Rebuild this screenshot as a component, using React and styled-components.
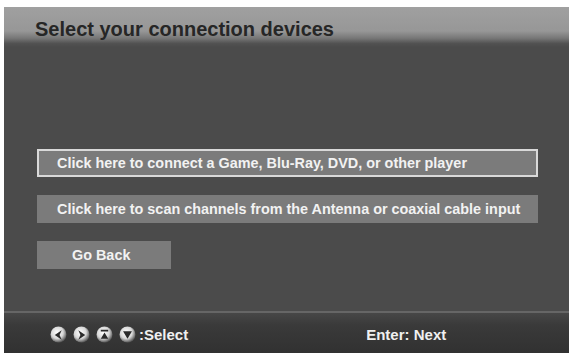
import React from "react";
import styled, { createGlobalStyle } from "styled-components";

const GlobalStyle = createGlobalStyle`
  html, body {
    margin: 0;
    padding: 0;
    background: #fff;
  }
  body {
    font-family: "Liberation Sans", Arial, sans-serif;
  }
`;

const Page = styled.div`
  width: 573px;
  height: 356px;
  padding: 7px 4px 3px 4px;
  box-sizing: border-box;
`;

const Screen = styled.div`
  height: 100%;
  display: flex;
  flex-direction: column;
  background: #4b4b4b;
`;

const Header = styled.div`
  height: 40px;
  padding-left: 31px;
  display: flex;
  align-items: center;
  background: linear-gradient(
    to bottom,
    #a0a0a0 0%,
    #979797 60%,
    #777777 78%,
    #525252 91%,
    #4b4b4b 100%
  );
`;

const Title = styled.h1`
  margin: 4px 0 0;
  font-size: 20px;
  font-weight: bold;
  color: #262626;
`;

const Body = styled.div`
  flex: 1;
  display: flex;
  flex-direction: column;
  justify-content: flex-end;
  gap: 18px;
  padding: 0 31px 42px 33px;
`;

const Option = styled.div`
  height: 28px;
  box-sizing: border-box;
  width: ${(p) => (p.$short ? "134px" : "100%")};
  display: flex;
  align-items: center;
  padding-left: ${(p) => (p.$short ? "33px" : "18px")};
  background: #7b7b7b;
  border: 2px solid ${(p) => (p.$active ? "#d9d9d9" : "#7b7b7b")};
  color: #f2f2f2;
  font-size: 14.4px;
  font-weight: bold;
`;

const Footer = styled.div`
  height: 42px;
  display: flex;
  align-items: center;
  padding: 3px 0 0 46px;
  box-sizing: border-box;
  border-top: 2px solid #666;
  background: linear-gradient(to bottom, #474747 0%, #3a3a3a 30%, #313131 100%);
  color: #f0f0f0;
  font-size: 15px;
  font-weight: bold;
`;

const Keys = styled.div`
  display: flex;
  align-items: center;
  gap: 6px;
`;

const Hint = styled.span`
  margin-left: ${(p) => p.$gap || "0px"};
`;

const arrows = {
  left: "M11 4 L4.5 8.5 L11 13 L9 8.5 Z",
  right: "M5 4 L11.5 8.5 L5 13 L7 8.5 Z",
  up: "M4.5 3.5 H11.5 V5.2 H4.5 Z M8 6 L11.5 12 H4.5 Z",
  down: "M3.8 5 H12.2 L8 12 Z",
};

const Key = ({ dir }) => (
  <svg width="17" height="17" viewBox="0 0 16 16">
    <defs>
      <radialGradient id={`g-${dir}`} cx="42%" cy="38%" r="62%">
        <stop offset="0%" stopColor="#ffffff" />
        <stop offset="60%" stopColor="#d8d8d8" />
        <stop offset="100%" stopColor="#5a5a5a" />
      </radialGradient>
    </defs>
    <circle cx="8" cy="8" r="7.5" fill={`url(#g-${dir})`} />
    <path d={arrows[dir]} fill="#2a2a2a" />
  </svg>
);

export default function App() {
  return (
    <Page>
      <GlobalStyle />
      <Screen>
        <Header>
          <Title>Select your connection devices</Title>
        </Header>
        <Body>
          <Option $active>
            Click here to connect a Game, Blu-Ray, DVD, or other player
          </Option>
          <Option>
            Click here to scan channels from the Antenna or coaxial cable input
          </Option>
          <Option $short>Go Back</Option>
        </Body>
        <Footer>
          <Keys>
            <Key dir="left" />
            <Key dir="right" />
            <Key dir="up" />
            <Key dir="down" />
          </Keys>
          <Hint $gap="3px">:Select</Hint>
          <Hint $gap="178px">Enter: Next</Hint>
        </Footer>
      </Screen>
    </Page>
  );
}
